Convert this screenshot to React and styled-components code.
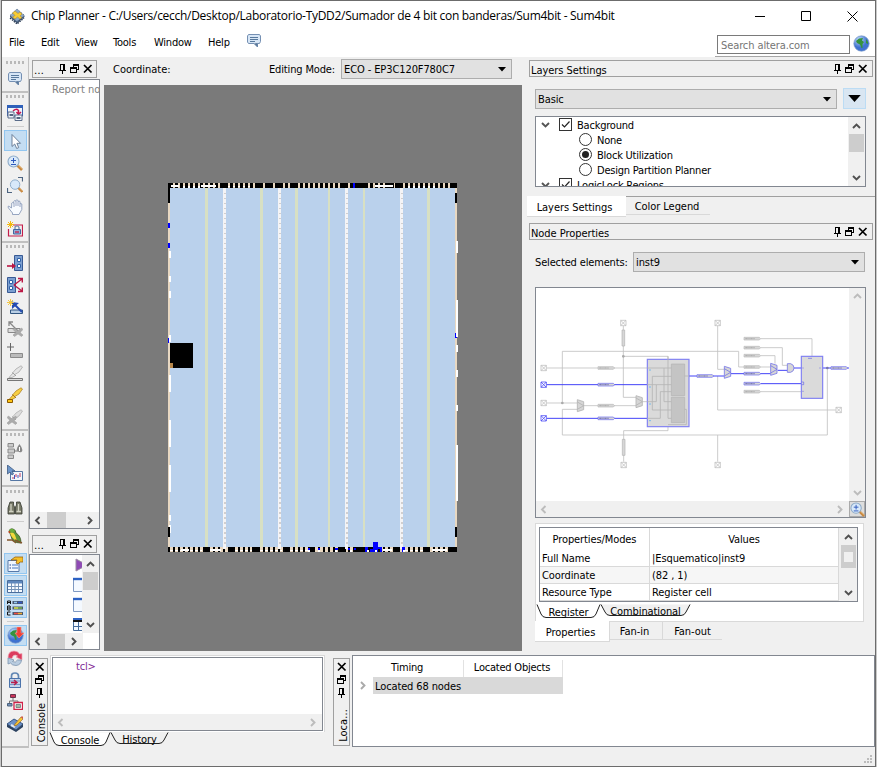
import React from "react";
import styled, { createGlobalStyle, css } from "styled-components";

const Global = createGlobalStyle`
  * { box-sizing: border-box; }
  body { margin: 0; background: #c9c9c9; overflow: hidden; }
  svg { display: block; flex: none; }
`;

const Desktop = styled.div`
  width: 877px; height: 767px; padding: 0 1px 0 1px; background: #c9c9c9;
  font: 11px/15px "DejaVu Sans Condensed", "DejaVu Sans", sans-serif;
  font-stretch: condensed; letter-spacing: -0.22px; color: #000; white-space: nowrap;
`;
const Window = styled.div`
  width: 875px; height: 767px; display: flex; flex-direction: column;
  background: #f0f0f0; border: 1px solid #6c6c6c;
`;
const TitleBar = styled.header`
  height: 30px; flex: none; display: flex; align-items: center; background: #fff; padding-left: 7px;
`;
const Title = styled.h1`
  margin: 0 auto 0 5px; font: 400 12px/18px "Open Sans", "Noto Sans", sans-serif; letter-spacing: -0.29px;
`;
const CaptionButton = styled.div`
  width: 46px; height: 28px; display: grid; place-items: center;
`;
const MenuBar = styled.nav`
  height: 26px; flex: none; display: flex; background: #fff; padding-left: 7px;
`;
const MenuItem = styled.span`
  width: ${(p) => p.$w}px; padding-top: 4px;
`;
const MenuIcon = styled.span`padding-top: 2px;`;
const SearchArea = styled.div`
  margin-left: auto; width: 160px; display: flex; gap: 3px; padding: 4px 0 0 2px; border-bottom: 1px solid #a6a6a6;
`;
const SearchField = styled.div`
  width: 133px; height: 19px; border: 1px solid #7a7a7a; color: #757575; padding: 2px 3px; letter-spacing: -0.1px;
`;
const Body = styled.div`flex: 1; display: flex; min-height: 0;`;
const StatusBar = styled.footer`
  height: 18px; flex: none; display: flex; justify-content: flex-end; align-items: flex-end; padding: 0 2px 2px 0;
`;

/* left tool column */
const Tools = styled.aside`
  width: 27px; flex: none; border-right: 1px solid #c3c3c3;
`;
const ToolSection = styled.div`
  height: ${(p) => p.$h}px; padding-top: ${(p) => p.$top}px;
  border-bottom: 2px solid #c0c0c0; display: flex; flex-direction: column; align-items: center;
`;
const Grip = styled.div`
  width: 19px; height: 3px; flex: none; margin-bottom: 4px;
  background: repeating-linear-gradient(90deg, #b9b9b9 0 2px, transparent 2px 4px);
`;
const Slot = styled.div`
  width: 23px; height: 22px; flex: none; display: grid; place-items: center;
  ${(p) => p.$on && css`background: #c4ddf2; border: 1px solid #92c6f0; height: 21px; margin-bottom: 1px;`}
`;
const Rule = styled.div`
  width: 17px; height: 6px; flex: none; border-bottom: 1px solid ${(p) => (p.$hidden ? "transparent" : "#cdcdcd")};
  margin-top: -3px; margin-bottom: 3px;
`;

const Workspace = styled.div`flex: 1; min-width: 0; display: flex; flex-direction: column;`;
const Upper = styled.div`height: 594px; flex: none; display: flex;`;
const Lower = styled.div`flex: 1; min-height: 0; display: flex; padding-top: 4px;`;

/* dock headers */
const DockHeader = styled.div`
  height: ${(p) => p.$h ?? 18}px; flex: none; border: 1px solid #a0a0a0; display: flex; align-items: center;
  margin: ${(p) => p.$m ?? "0"}; padding: 0 ${(p) => p.$pr ?? 4}px 0 1px; gap: 3px;
`;
const DockTitle = styled.span`margin-right: auto; padding-top: 3px; letter-spacing: -0.05px;`;
const SideHeader = styled.div`
  width: 17px; height: 88px; flex: none; border: 1px solid #a0a0a0; display: flex; flex-direction: column;
  align-items: center; padding-top: 3px; gap: 3px; margin: ${(p) => p.$m};
`;
const SideTitle = styled.span`
  writing-mode: vertical-rl; transform: rotate(180deg); margin: auto -3px 0 0; line-height: 15px; padding-top: 3px;
  letter-spacing: 0;
`;
const Left = styled.div`width: 73px; flex: none; display: flex; flex-direction: column;`;
const Well = styled.div`
  border: 1px solid #828790; background: #fff; display: flex; flex-direction: column; overflow: hidden;
  height: ${(p) => p.$h}px; width: ${(p) => p.$w}px; flex: none; margin: ${(p) => p.$m ?? "0"};
`;
const ReportText = styled.div`flex: 1; color: #808080; padding: 2px 0 0 22px; letter-spacing: 0;`;
const Row = styled.div`display: flex; flex: ${(p) => (p.$grow ? 1 : "none")}; min-height: 0;`;
const TreeIcons = styled.div`
  flex: 1; overflow: hidden; display: flex; flex-direction: column; padding: 2px 0 0 43px; gap: 4px;
`;
const Bar = styled.div`
  background: #f0f0f0; flex: ${(p) => (p.$grow ? "1" : "none")}; display: flex; align-items: center; justify-content: space-between;
  ${(p) => p.$v ? css`width: ${p.$size ?? 17}px; flex-direction: column; padding: ${p.$p ?? "5px 0 4px"};`
    : css`height: ${p.$size ?? 16}px; padding: ${p.$p ?? "0 5px 0 3px"};`}
`;
const Thumb = styled.div`
  background: #cdcdcd; margin: ${(p) => p.$m}; width: ${(p) => p.$w}px; height: ${(p) => p.$h}px; flex: none;
  display: grid; place-items: center;
`;
const ThumbMark = styled.i`width: 9px; height: 10px; background: #f0f0f0;`;

const Center = styled.main`width: 420px; flex: none; padding-left: 2px;`;
const ModeRow = styled.div`height: 28px; display: flex; align-items: flex-start; padding: 2px 0 0 9px;`;
const Label = styled.span`width: ${(p) => p.$w}px; padding-top: 3px; flex: none; letter-spacing: ${(p) => p.$ls}px;`;
const Combo = styled.div`
  width: ${(p) => p.$w}px; height: 20px; border: 1px solid #adadad; background: #e1e1e1; display: flex;
  justify-content: space-between; align-items: center; padding: 1px 5px 0 2px; letter-spacing: ${(p) => p.$ls ?? -0.1}px;
`;
const Canvas = styled.div`width: 418px; height: 566px; background: #7a7a7a; padding: 98px 0 0 64px;`;

const Right = styled.section`width: 353px; flex: none; display: flex; flex-direction: column; padding-left: 7px;`;
const SettingRow = styled.div`display: flex; padding: ${(p) => p.$p}; gap: ${(p) => p.$gap ?? 6}px; align-items: flex-start;`;
const DropButton = styled.div`
  width: 23px; height: 21px; margin-top: -1px; background: #d9e6f2; border: 1px solid #bcdcf4; display: grid; place-items: center;
`;
const LayerList = styled.div`flex: 1; overflow: hidden;`;
const LayerRow = styled.div`
  height: 15px; display: flex; align-items: center; gap: 5px; padding-left: ${(p) => (p.$child ? 43 : 5)}px;
`;
const LayerName = styled.span`padding-top: 1px;`;
const Check = styled.span`
  width: 13px; height: 13px; border: 1px solid #333; background: #fff; margin-left: 4px; flex: none;
`;
const Radio = styled.span`
  width: 13px; height: 13px; border: 1px solid #333; border-radius: 50%; background: #fff; flex: none;
  display: grid; place-items: center;
  &::after { content: ""; width: 7px; height: 7px; border-radius: 50%; background: ${(p) => (p.$on ? "#222" : "transparent")}; }
`;
const TabRow = styled.div`display: flex; align-items: flex-start; margin: ${(p) => p.$m};`;
const Tab = styled.div`
  width: ${(p) => p.$w}px; height: ${(p) => (p.$on ? 21 : 19)}px; text-align: center; flex: none;
  padding: ${(p) => (p.$on ? 4 : p.$top ? 2 : 3)}px ${(p) => p.$pr ?? 2}px 0 0; background: ${(p) => (p.$on ? "#fff" : "transparent")};
  border-bottom: 1px solid #d9d9d9; border-right: ${(p) => (p.$div ? "1px solid #d9d9d9" : "none")};
  border-top: ${(p) => (p.$top ? "1px solid #a0a0a0" : "none")}; letter-spacing: -0.05px;
`;
const TabFill = styled.div`flex: 1; border-top: 1px solid #a0a0a0;`;
const Corner = styled.div`width: 16px; height: 16px; display: grid; place-items: center; background: #ddd; border: 1px solid #aaa;`;

const PropFrame = styled.div`
  width: 329px; height: 99px; flex: none; margin: 5px 0 0 6px; border: 1px solid #d9d9d9; background: #fff;
  padding: 3px 0 0 3px;
`;
const PropTable = styled.div`
  width: 319px; height: 75px; border: 1px solid #828790; display: flex; overflow: hidden;
`;
const PropGrid = styled.div`flex: 1; display: grid; grid-template-columns: 110px 1fr; grid-template-rows: 22px 17px 17px 17px; background: #fff;`;
const Cell = styled.div`
  padding: ${(p) => (p.$head ? "4px 0 0" : "1px 2px 0")}; text-align: ${(p) => (p.$head ? "center" : "left")};
  border-right: 1px solid #d9d9d9; border-bottom: ${(p) => (p.$head ? "none" : "1px solid #d9d9d9")};
  background: ${(p) => (p.$alt ? "#f6f6f6" : "#fff")}; letter-spacing: -0.1px;
`;
const SheetTabs = styled.div`display: flex; height: 16px; flex: none; margin: ${(p) => p.$m};`;
const SheetTab = styled.div`
  width: ${(p) => p.$w}px; height: 16px; position: relative; text-align: center; flex: none; padding-top: ${(p) => (p.$on ? 1 : 0)}px;
  margin-right: ${(p) => (p.$on ? 1 : 0)}px; letter-spacing: -0.1px;
  svg { position: absolute; left: 0; top: 0; overflow: visible; }
  span { position: relative; }
`;

const ConsoleFrame = styled.div`width: 275px; height: 92px; flex: none; margin-left: 2px;`;
const ConsoleEdge = styled.div`height: 77px; border: 1px solid #d9d9d9; background: #fff; padding: 1px; border-bottom: none;`;
const Prompt = styled.div`flex: 1; color: #7f2b95; padding: 1px 0 0 23px;`;
const Located = styled.div`flex: 1; height: 92px; border: 1px solid #828790; background: #fff; margin-left: 2px;`;
const LocatedHead = styled.div`display: flex; height: 21px; padding-top: 4px;`;
const HeadCell = styled.div`
  width: ${(p) => p.$w}px; height: 17px; text-align: center; border-right: 1px solid #e2e2e2; padding-right: 2px;
`;
const LocatedRow = styled.div`display: flex; height: 17px; align-items: center; padding-left: 5px; gap: 6px;`;
const Selected = styled.div`width: 190px; height: 17px; background: #d9d9d9; padding: 2px 2px 0; letter-spacing: -0.12px;`;

const Chevron = ({ dir = "down", c = "#505050" }) => {
  const d = { down: "M1 3L4.5 6.5L8 3", up: "M1 6L4.5 2.5L8 6", left: "M6.5 1L3 4.5L6.5 8", right: "M3 1L6.5 4.5L3 8" }[dir];
  return <svg width="9" height="9" viewBox="0 0 9 9"><path d={d} fill="none" stroke={c} strokeWidth="1.9" /></svg>;
};
const Arrow = ({ w = 8 }) => <svg width={w} height={w / 2 + 0.5} viewBox="0 0 8 4.5"><path d="M0 0H8L4 4.5Z" /></svg>;
const Pin = () => (
  <svg width="9" height="10" viewBox="0 0 9 10" fill="none" stroke="#000" shapeRendering="crispEdges">
    <path d="M2.5 6V.5H5.5V6M0.5 6.5H8M4.5 7V10" /><path d="M6 0V6" strokeWidth="1.4" />
  </svg>
);
const Restore = () => (
  <svg width="10" height="10" viewBox="0 0 10 10" shapeRendering="crispEdges">
    <path d="M3 0H9V6H7V5H8V2H4V3H3Z" /><path d="M0 3H7V9H0ZM1 5V8H6V5Z" fillRule="evenodd" />
  </svg>
);
const Close = () => <svg width="10" height="10" viewBox="0 0 10 10"><path d="M1 1L8.5 8.5M8.5 1L1 8.5" stroke="#000" strokeWidth="1.7" /></svg>;
const DockButtons = () => <><Pin /><Restore /><Close /></>;

const Bubble = () => (
  <svg width="16" height="16" viewBox="0 0 16 16"><path d="M2.5 1.5H13.5L14.5 3V8.5L13.5 10.5H11.5V14L8 10.5H2.5L1.5 9V3Z" fill="#d7e6f6" stroke="#7590b3" /><path d="M4 4.5H12M4 6.5H12M4 8.5H9" stroke="#4a6c93" strokeWidth=".9" /><path d="M8 10.5L11.5 14V10" fill="#5a789b" /></svg>
);
const Globe = ({ arrow }) => (
  <svg width="17" height="17" viewBox="0 0 17 17"><defs><radialGradient id="gl" cx="35%" cy="25%"><stop offset="0" stopColor="#c3defc" /><stop offset="1" stopColor="#3f72d0" /></radialGradient></defs>
    <circle cx="8.5" cy="8.5" r="7.7" fill="url(#gl)" stroke="#7d9bc8" strokeWidth=".7" />
    <path d="M3 6L6 3.5L10 3L9 5.5L11 7L9.5 9V13H8.5L7 9.5L4 8ZM13 4L15 7V9L13 8Z" fill="#35923c" />
    {arrow && <path d="M10 0H14V6H17L12 11L8 6H10Z" fill="#ef4038" stroke="#fa8b78" strokeWidth=".7" />}
  </svg>
);
const Logo = () => (
  <svg width="17" height="17" viewBox="0 0 17 17"><path d="M1 9L8 15.5L15.5 9V8L8 2L1 8Z" fill="#3c5373" /><path d="M1 7.5L8 1L15.5 7.5L8 13.5Z" fill="#8fa9c6" stroke="#5f7694" strokeDasharray="1.5 1" /><path d="M3.5 5L6 3L9 5.5L11 4L13 6L11 8L13 9.5L11 11L8.5 9L6 11L3.5 9L6 7.5Z" fill="#f6cc35" stroke="#ad8522" strokeWidth=".5" /><path d="M1 10L8 16L15 10" fill="none" stroke="#24364e" strokeWidth="1.3" strokeDasharray="1.5 1" /></svg>
);

const Magnifier = () => <><path d="M10 10L15 15" stroke="#c98a43" strokeWidth="2.6" /><path d="M11 9.8L15.5 14" stroke="#e9bf82" strokeWidth=".8" /><circle cx="6.5" cy="6.5" r="5.5" fill="#d8e9fa" stroke="#8caac8" strokeWidth="1.1" /></>;
const Pen = ({ a, b }) => <><path d="M7 10L5.5 8L9 4L14 .8L15.5 2L12 7Z" fill={b} stroke={a} strokeWidth=".7" /><path d="M6 8L8.5 10.5L5 12.5H2Z" fill={b} stroke={a} strokeWidth=".7" /><path d="M5.5 7.5L9 11" stroke={a} strokeWidth="1" /></>;
const Cross = () => <path d="M1.5 7L5 10L8.5 7L10 8.5L7 11.5L10 14L8.5 15.5L5 13L1.5 15.5L0 14L3 11.5L0 8.5Z" fill="#acacac" stroke="#999" strokeWidth=".5" />;

const art = {
  windows: <><path d="M.5 1.5H15.5V11H.5Z" fill="#eef4fb" stroke="#3a60ad" /><path d="M0 0H16V3H0Z" fill="#2e60b9" /><path d="M6 6Q9 3 11.5 5.5V9M9.5 7L11.5 9.5L14 7" stroke="#c51850" strokeWidth="1.5" fill="none" /><path d="M1 7H7V13H1ZM8 10H15V15.5H8Z" fill="#f1f5fb" stroke="#596b89" /><path d="M2.5 9H6V11H2.5ZM9.5 12H13.5V14H9.5Z" fill="#53647f" /></>,
  cursor: <path d="M5 1.5V13.5L7.7 11L9.7 15.5L11.7 14.6L9.9 10.3H13.5Z" fill="#fff" stroke="#61758f" strokeWidth=".9" />,
  zoom: <><Magnifier /><path d="M4 5.5H9M6.5 3V8M4 9.5H9" stroke="#2d59bd" /></>,
  fit: <><path d="M11 .5H15.5V4.5M.5 11V15.5H5" stroke="#4d6480" fill="none" strokeWidth="1.2" /><g transform="translate(2.5 2) scale(.86)"><Magnifier /></g></>,
  hand: <path d="M4.5 9L1.5 7Q.5 8 1.5 9L5.5 14V15.5H12L14.8 10.5V5Q14 3.6 13 5V2.5Q12 1.5 11 2.5V1.5Q9.8 0 9 1.5V2Q7 1 6.8 2.5V4Q5 3 4.8 4Z M7 4V8M9 2V7M11 2.5V7M13 5V8" fill="#f8fbff" stroke="#7d90b3" strokeWidth=".8" />,
  region: <><path d="M6 4H15.5V15H1.5V8" fill="none" stroke="#c41e4b" strokeWidth="1.2" /><path d="M8 9V6Q10.5 3.5 12 6.5V9" fill="none" stroke="#748cae" strokeWidth="1.3" /><path d="M6.5 8.5H13.5V13H6.5Z" fill="#8faed7" stroke="#4267a0" /><path d="M8 11H12" stroke="#c41e4b" strokeWidth="1.3" /><path d="M3.5 0V7M0 3.5H7M1 1L6 6M6 1L1 6" stroke="#f3b90f" /></>,
  fanin: <><path d="M7.5.5H15.5V15.5H7.5Z" fill="#7c9fd0" stroke="#385a94" /><path d="M10.5 3.5H13.5V6.5H10.5ZM10.5 9.5H13.5V12.5H10.5Z" fill="#fff" stroke="#2e61a8" /><path d="M0 11H8" stroke="#bb1744" strokeWidth="1.6" /><path d="M5 8L9 11L5 14Z" fill="#bb1744" /></>,
  fanout: <><path d="M.5.5H8.5V15.5H.5Z" fill="#7c9fd0" stroke="#385a94" /><path d="M2.5 3.5H5.5V6.5H2.5ZM2.5 9.5H5.5V12.5H2.5Z" fill="#fff" stroke="#2e61a8" /><path d="M7 8L15 2M7 8L15 14M11 1.5H15.3V5.5M11 14.5H15.3V10.5" stroke="#bb1744" strokeWidth="1.4" fill="none" /></>,
  wand: <><path d="M3.5 11H15.5V14.5H3.5Z" fill="#b9cfe6" stroke="#315681" /><path d="M5 3L15 13" stroke="#254bb2" strokeWidth="2" /><path d="M5 3V10L12 4Z" fill="#254bb2" /><path d="M3.5 0V7M0 3.5H7M1 1L6 6M6 1L1 6" stroke="#f2c747" /></>,
  wirex: <><path d="M1 7.5H13V11.5H1Z" fill="#ddd" stroke="#888" /><path d="M2 1L12 11M2 5V1H6" stroke="#888" strokeWidth="1.3" fill="none" /><g transform="translate(6 0)"><Cross /></g></>,
  add: <><path d="M3.5 0V8M0 4H7" stroke="#666" /><path d="M3.5 10.5H15.5V14.5H3.5Z" fill="#bbb" stroke="#8b8b8b" /></>,
  penline: <><Pen a="#a0a0a0" b="#e5e5e5" /><path d="M.5 13.5H15.5V15.5H.5Z" fill="#ddd" stroke="#777" /></>,
  pen: <><Pen a="#a8781c" b="#f7cf43" /><path d="M.5 12.5H5.5V15.5H.5Z" fill="#ffc514" stroke="#8b5a00" /></>,
  penx: <><Pen a="#aaa" b="#ddd" /><Cross /></>,
  ink: <><path d="M1 .5H6.5V4H1ZM1 6H7.5V10H1ZM1 12H6.5V15.5H1Z" fill="#ccc" stroke="#888" /><path d="M7 8H11" stroke="#777" /><path d="M12.5 1Q17 7 14.5 9Q12.5 10 10.5 8Q8.5 6 12.5 1Z" fill="#888" /><path d="M12.5 4V8" stroke="#fff" /></>,
  chart: <><path d="M3.5 6.5H15.5V15.5H3.5Z" fill="#f3f7fc" stroke="#5577a4" /><path d="M6 14V12M9 12V9M13 12V8" stroke="#c1385c" /><path d="M7.5 10V14M11 10V13" stroke="#445bc0" /><path d="M.5 0V9L3 7L5 10L6.5 9L5 6H8Z" fill="#6e96c9" stroke="#3e5b83" strokeWidth=".8" /></>,
  find: <><path d="M3 2H6.5V5L7.5 7V14H1V8ZM9.5 2H13L15 8V14H8.5V7L9.5 5Z" fill="#777968" stroke="#353830" strokeWidth=".8" /><path d="M2 11.5H6.5M9.5 11.5H14M4 4V11M11.5 4V11" stroke="#d1d2c3" strokeWidth="1.3" /></>,
  parrot: <><path d="M2 3Q3 0 6 1Q9 2 9 5Q14 8 14 15Q5 15 4 8Z" fill="#5c963a" stroke="#385422" strokeWidth=".8" /><path d="M3 5Q6 3 8 7L10 13Q5 11 3 5Z" fill="#f2d83b" /><path d="M2 3Q3 0 6 1L8 3L5 5Z" fill="#6cae3e" /><path d="M0 12H5L9 15M8 12L15 15" stroke="#82552d" strokeWidth="1.4" fill="none" /><circle cx="2.4" cy="4" r="1" fill="#c4411c" /></>,
  hand2: <><path d="M1 4.5H12V15.5H1Z" fill="#f0f6ff" stroke="#5779a9" /><path d="M5 9H11M5 12H11" stroke="#4676be" /><path d="M2.5 9H4M2.5 12H4" stroke="#224389" /><path d="M4 4L8 1H16V6H13L11 8L9 7L10 4H6Z" fill="#f5bf28" stroke="#976211" strokeWidth=".8" /></>,
  table: <><path d="M.5 2.5H15.5V14.5H.5Z" fill="#f8fbff" stroke="#496d9c" /><path d="M1 3H15V5.5H1Z" fill="#5e87bd" /><path d="M1 8.5H15M1 11.5H15M4.5 5V14M8 5V14M11.5 5V14" stroke="#7492b8" /></>,
  legend: <><path d="M5.5 1H16V4H5.5ZM5.5 6.5H16V9.5H5.5ZM5.5 12H16V15H5.5Z" fill="#4a5971" /><path d="M7 2.5H10" stroke="#96c9f4" strokeWidth="1.5" /><path d="M11 2.5H15" stroke="#3256c4" strokeWidth="1.5" /><path d="M7 8H11" stroke="#dfea45" strokeWidth="1.5" /><path d="M11 8H15" stroke="#78b64a" strokeWidth="1.5" /><path d="M7 13.5H11" stroke="#ed4f3f" strokeWidth="1.5" /><path d="M11 13.5H15" stroke="#f1ac34" strokeWidth="1.5" /><path d="M.5 4V1H3.5V4M.5 2.5H3.5M.5 6H3L3.5 7L2.8 8L3.5 9L3 10H.5ZM.5 8H3M3.5 12H.5V15H3.5" fill="none" stroke="#151515" /></>,
  refresh: <><path d="M1 8Q1 1 7 1Q11 1 12.5 4L15 3.5V10L9 7L10.5 6Q8 4 6 6L5 8.5Z" fill="#dc3c5e" stroke="#f0a6b5" strokeWidth=".7" /><path d="M14.5 10Q14 15 9 15.5Q5 15.5 3.5 13L1 14V8L7 10L5.5 11.5Q8.5 13.5 10.5 10Z" fill="#b9cce0" stroke="#7c94ae" strokeWidth=".8" /></>,
  lock: <><path d="M4.5 8V4Q4.5 1 8 1Q11.5 1 11.5 4V8" fill="none" stroke="#6287b4" strokeWidth="1.7" /><path d="M2.5 6.5H13.5V15.5H2.5Z" fill="#c3d6ec" stroke="#4b73ab" /><path d="M3 9H13M3 12.5H13" stroke="#7698c4" /><path d="M4 10.5H10M7 8L10 10.5L7 13" fill="none" stroke="#b71d4c" strokeWidth="1.4" /></>,
  hierarchy: <><path d="M6 4V7H2.5V10M6 7H11V10" stroke="#777" fill="none" /><path d="M3.5.5H8.5V3.5H3.5Z" fill="#cb3258" stroke="#68344c" /><path d="M.5 9.5H5V12H.5Z" fill="#7793b9" stroke="#4c627d" /><path d="M7 8.5H15.5V15.5H7Z" fill="#fff" stroke="#cf2248" strokeWidth="1.3" /><path d="M9 10.5H13.5V13.5H9Z" fill="#a5b8a5" stroke="#677" strokeWidth=".8" /></>,
  editor: <><path d="M0 8L7 3L16 8L9 14Z" fill="#6c91c8" stroke="#395884" /><path d="M0 8V11L9 16V14ZM16 8V11L9 16V14Z" fill="#2c4260" /><path d="M4 9L8 11" stroke="#e4edf7" strokeWidth="2" /><path d="M8 8L14 1L16 3L10 9L7 10Z" fill="#f6c334" stroke="#9d7029" strokeWidth=".7" /><path d="M14 1L15 0L16 1V3Z" fill="#d45348" /></>,
};
const ToolIcon = ({ n, s = 16 }) => n === "bubble" ? <Bubble /> : n === "globe" ? <Globe arrow /> : <svg width={s} height={s} viewBox="0 0 16 16">{art[n]}</svg>;
const sections = [
  { h: 36, top: 4, items: ["bubble"] },
  { h: 150, top: 2, items: ["windows", "-", "*cursor", "zoom", "fit", "hand", "region"] },
  { h: 188, top: 2, items: ["fanin", "fanout", "wand", "wirex", "add", "penline", "pen", "penx"] },
  { h: 56, top: 2, items: ["ink", "chart"] },
  { h: 261, top: 3, items: ["find", "-", "parrot", "~", "*hand2", "*table", "*legend", "-", "*globe", "refresh", "lock", "hierarchy", "editor"] },
];

/* floor plan of the device */
const solid = [[0, 3], [52, 5], [87, 5], [97, 5], [107, 5], [125, 5], [175, 5], [187, 10], [220, 6], [230, 4], [285, 4]];
const solidB = [[35, 5], [60, 7], [84, 6], [115, 7], [142, 5], [172, 6], [187, 10], [202, 7], [225, 5], [257, 5], [280, 9]];
const whitesL = [[68, 7], [93, 6], [108, 7], [152, 7], [192, 17], [237, 27], [282, 27], [332, 6], [342, 8]];
const whitesR = [[58, 12], [117, 37], [162, 7], [187, 7], [222, 6], [262, 56]];
const Chip = () => (
  <svg width="290" height="369" viewBox="0 0 290 369" shapeRendering="crispEdges">
    <defs>
      <pattern id="pads" width="5" height="5" patternUnits="userSpaceOnUse"><rect width="5" height="5" fill="#ead9c2" /><rect x="2" width="3" height="5" /></pattern>
      <pattern id="padsB" width="5" height="5" patternUnits="userSpaceOnUse" patternTransform="translate(0 364)"><rect width="5" height="5" fill="#ead9c2" /><rect width="2" height="5" /></pattern>
      <pattern id="dash" width="5" height="5" patternUnits="userSpaceOnUse"><rect width="5" height="1" fill="#d2cfcf" /></pattern>
      <pattern id="dash2" width="5" height="5" patternUnits="userSpaceOnUse" patternTransform="translate(0 -1)"><rect width="5" height="2" fill="#d2cfcf" /></pattern>
    </defs>
    <rect width="289" height="369" fill="#e8d8c2" />
    <rect x="2" y="5" width="285" height="359" fill="#bad1ec" />
    <rect width="289" height="5" fill="url(#pads)" /><rect y="364" width="289" height="5" fill="url(#padsB)" />
    {solid.map(([x, w]) => <rect key={x} x={x} width={w} height="5" />)}
    {solidB.map(([x, w]) => <rect key={x} x={x} y="364" width={w} height="5" />)}
    {[[37, 3], [92, 3], [127, 3], [160, 2], [195, 2], [259, 3]].map(([x, w]) => <rect key={x} x={x} y="5" width={w} height="359" fill="#d8e0c3" />)}
    {[55, 110, 177, 232].map((x) => <g key={x}><rect x={x} y="5" width="3" height="361" fill="#f4f4f6" /><rect x={x + 1} y="8" width="2" height="222" fill="url(#dash)" /><rect x={x + 1} y="230" width="2" height="134" fill="url(#dash2)" /></g>)}
    {whitesL.map(([y, h]) => <rect key={y} x="1" y={y} width="2" height={h} fill="#fff" />)}
    {whitesR.map(([y, h]) => <rect key={y} x="288" y={y} width="2" height={h} fill="#fff" />)}
    <path d="M3 3H11M33 3H48M207 3H225" stroke="#fff" strokeWidth="2" />
    <path d="M15 4H32M240 4H270" stroke="#fff" strokeWidth="2" strokeDasharray="2 3" />
    <path d="M60 3.5H85" stroke="#fff" strokeDasharray="2 3" />
    <path d="M13 367H21M42 367H53M215 367H224M264 367H279" stroke="#fff" strokeWidth="2" />
    <path d="M2 367.5H34M67 367.5H84M92 367.5H114M122 367.5H140M237 367.5H256" stroke="#fff" strokeDasharray="3 2" />
    <path d="M0 5H2V20H0ZM0 344H2V354H0ZM287 10H289V20H287ZM287 344H289V354H287Z" />
    <path d="M0 40H2V45H0ZM0 60H2V65H0ZM0 155H1V160H0ZM185 0H187V5H185ZM287 150H288V154H289V155H287ZM205 359H210V364H214V369H212V366H210V369H202V366H205ZM197 364H200V369H197ZM140 365H142V367H140ZM150 365H152V367H150ZM167 365H170V367H167ZM180 365H182V367H180ZM186 365H188V367H186ZM234 364H237V369H234Z" fill="#00f" />
    <path d="M140 368H142M150 368H152M167 368H169M182 368H184M199 368H201M207 368H209M235 368H237" stroke="#fff" strokeWidth="2" />
    <rect x="2" y="160" width="23" height="25" /><rect x="2" y="180" width="3" height="5" fill="#b58549" />
  </svg>
);

const Port = ({ x, y, on }) => <path d={`M${x - 8} ${y - 8}h16v16h-16zl16 16m0-16l-16 16`} fill="none" stroke={on ? "#4747f5" : "#bdbdbd"} strokeWidth="2.3" />;
const Tag = ({ x, y, on, v }) => v
  ? <path d={`M${x - 4} ${y}h8v48h-8z`} fill="#d7d7d7" stroke="#b2b2b2" strokeWidth="2" />
  : <g><path d={`M${x} ${y - 4}h46l4 4l-4 4h-46z`} fill="#d7d7d7" stroke={on ? "#6666ee" : "#b8b8b8"} strokeWidth="2" /><path d={`M${x + 4} ${y}h30`} stroke={on ? "#5353aa" : "#a2a2a2"} strokeWidth="2.5" strokeDasharray="7 2 4 2" /></g>;
const Mux = ({ x, y, on }) => <path d={`M${x} ${y - 18}l19 6v24l-19 6zM${x} ${y - 11}L${x + 19} ${y}L${x} ${y + 11}`} fill="#d6d6d6" stroke={on ? "#7777e8" : "#b3b3b3"} strokeWidth="2.5" />;
const Schematic = () => (
  <svg width="313" height="213" viewBox="18 24 939 639">
    <g fill="none" stroke="#c2c2c2" strokeWidth="2.5">
      <path d="M50 264H352M50 369H142M97 369V214H626V261H642M142 388H97V465H892V264M162 377H318M280 138V352H318M280 229H414V252M338 365H352M563 138V268H582M563 288V390H917M563 465V545M281 545V452H414V434M692 176H846V229M692 203H757V256H772M692 227H735V251M692 261H721M692 335H814" />
    </g>
    <g fill="none" stroke="#4343f8" strokeWidth="3"><path d="M50 314H352M50 415H352M477 288H582M603 281H721M743 271H772M792 264H814M692 311H814M878 264H903M950 264H957" /></g>
    <rect x="352" y="238" width="125" height="202" fill="#dadada" stroke="#8080f2" strokeWidth="3.5" />
    <path d="M424 252H464V347H424ZM424 352H464V428H424Z" fill="#c4c4c4" stroke="#b2b2b2" strokeWidth="2" />
    <path d="M352 264H424M367 390V289H424M352 314H379M352 365H379V314H424M352 415H391V335H424M402 264V365H424M414 229V415H424M367 390H424M464 288H477M464 388H469V434H414" fill="none" stroke="#b5b5b5" strokeWidth="2.5" />
    <path d="M358 270h4M358 321h4M358 372h4M358 422h4" stroke="#45aaf0" strokeWidth="3" />
    <rect x="814" y="229" width="64" height="126" fill="#dadada" stroke="#8080f2" strokeWidth="3.5" />
    <path d="M834 235h12M817 264h4M868 264h4M815 306h6v8h-6M817 334h4" fill="none" stroke="#6666e9" strokeWidth="2" />
    <Port x={41} y={264} /><Port x={41} y={314} on /><Port x={41} y={369} /><Port x={41} y={415} on />
    <Port x={280} y={129} /><Port x={563} y={129} /><Port x={281} y={555} /><Port x={563} y={555} /><Port x={926} y={390} />
    <Tag v x={280} y={150} /><Tag v x={281} y={478} />
    <Tag x={204} y={264} /><Tag x={204} y={314} on /><Tag x={204} y={377} /><Tag x={204} y={415} on /><Tag x={501} y={288} on />
    <Tag x={642} y={176} /><Tag x={642} y={203} /><Tag x={642} y={227} /><Tag x={642} y={261} /><Tag x={642} y={281} on /><Tag x={642} y={311} on /><Tag x={642} y={335} /><Tag x={903} y={264} on />
    <Mux x={142} y={377} /><Mux x={318} y={365} /><Mux x={583} y={277} on /><Mux x={722} y={268} on />
    <path d="M772 251h10q10 3 10 13q0 10-10 13h-10z" fill="#d6d6d6" stroke="#7777e8" strokeWidth="2.5" />
    <circle cx="97" cy="369" r="4" fill="#aaa" /><circle cx="280" cy="229" r="4" fill="#aaa" /><circle cx="892" cy="264" r="4" fill="#77a" />
  </svg>
);

const Sheet = ({ w, on, children }) => {
  const b = on ? 14 : 12;
  return (
    <SheetTab $w={w} $on={on}>
      <svg width={w} height="16"><path d={`M0 .5L4 ${b - 4}Q5.5 ${b - 0.5} 9 ${b - 0.5}H${w - 9}Q${w - 5.5} ${b - 0.5} ${w - 4} ${b - 4}L${w} .5`} fill={on ? "#fff" : "#f0f0f0"} stroke="#222" /></svg>
      <span>{children}</span>
    </SheetTab>
  );
};
const TreeCheck = () => <Check><svg width="11" height="11"><path d="M2 5.5L4.5 8L9.5 2.5" fill="none" stroke="#222" strokeWidth="1.2" /></svg></Check>;
const WindowGlyph = () => <svg width="16" height="16"><path d="M.5 1.5H15.5V14.5H.5Z" fill="#f4f9ff" stroke="#7f99c2" /><path d="M0 2H16" stroke="#2c61c3" strokeWidth="2.4" /></svg>;
const properties = [["Full Name", "|Esquematico|inst9"], ["Coordinate", "(82 , 1)"], ["Resource Type", "Register cell"]];

export default function App() {
  return (
    <Desktop>
      <Global />
      <Window>
        <TitleBar>
          <Logo />
          <Title>Chip Planner - C:/Users/cecch/Desktop/Laboratorio-TyDD2/Sumador de 4 bit con banderas/Sum4bit - Sum4bit</Title>
          <CaptionButton><svg width="10" height="10"><path d="M0 5.5H10" stroke="#000" /></svg></CaptionButton>
          <CaptionButton><svg width="10" height="10"><path d="M.5.5H9.5V9.5H.5Z" fill="none" stroke="#000" /></svg></CaptionButton>
          <CaptionButton><svg width="11" height="11"><path d="M.5.5L10.5 10.5M10.5.5L.5 10.5" stroke="#000" /></svg></CaptionButton>
        </TitleBar>
        <MenuBar>
          <MenuItem $w={32}>File</MenuItem><MenuItem $w={34}>Edit</MenuItem><MenuItem $w={38}>View</MenuItem>
          <MenuItem $w={41}>Tools</MenuItem><MenuItem $w={54}>Window</MenuItem><MenuItem $w={38}>Help</MenuItem>
          <MenuIcon><Bubble /></MenuIcon>
          <SearchArea><SearchField>Search altera.com</SearchField><Globe /></SearchArea>
        </MenuBar>
        <Body>
          <Tools>
            {sections.map((s, i) => (
              <ToolSection key={i} $h={s.h} $top={s.top}>
                <Grip />
                {s.items.map((n, j) => n === "-" ? <Rule key={j} /> : n === "~" ? <Rule key={j} $hidden />
                  : <Slot key={j} $on={n[0] === "*"}><ToolIcon n={n.replace("*", "")} /></Slot>)}
              </ToolSection>
            ))}
          </Tools>
          <Workspace>
            <Upper>
              <Left>
                <DockHeader $m="3px 5px 1px 3px" $pr={3}><DockTitle>…</DockTitle><DockButtons /></DockHeader>
                <Well $w={71} $h={450}>
                  <ReportText>Report not</ReportText>
                  <Bar><Chevron dir="left" /><Thumb $w={19} $h={16} $m="0 auto 0 5px" /><Chevron dir="right" /></Bar>
                </Well>
                <DockHeader $m="6px 5px 1px 3px" $pr={3}><DockTitle>…</DockTitle><DockButtons /></DockHeader>
                <Well $w={71} $h={96}>
                  <Row $grow>
                    <TreeIcons>
                      <svg width="16" height="16"><path d="M3 2L14 8L3 14Z" fill="#8f4bb5" stroke="#9b8ea3" /></svg>
                      <WindowGlyph /><WindowGlyph />
                      <svg width="16" height="16"><path d="M.5 1.5H15.5V13.5H.5Z" fill="#f4f9ff" stroke="#456c9c" /><path d="M0 2H16" stroke="#2c61c3" strokeWidth="2" /><path d="M0 4H16" stroke="#111" strokeWidth="2" /><path d="M0 9.5H16M5.5 5V14" stroke="#456c9c" /></svg>
                    </TreeIcons>
                    <Bar $v $size={17}><Chevron dir="up" /><Thumb $w={15} $h={18} $m="3px 0 auto" /><Chevron dir="down" /></Bar>
                  </Row>
                  <Row><Bar $size={16}><Chevron dir="left" /><Thumb $w={18} $h={15} $m="0 4px 0 5px" /><Chevron dir="right" /></Bar></Row>
                </Well>
              </Left>
              <Center>
                <ModeRow>
                  <Label $w={156} $ls={0}>Coordinate:</Label><Label $w={72} $ls={-0.15}>Editing Mode:</Label>
                  <Combo $w={171} $ls={-0.1}>ECO - EP3C120F780C7<Arrow /></Combo>
                </ModeRow>
                <Canvas><Chip /></Canvas>
              </Center>
              <Right>
                <DockHeader $h={17} $m="3px 2px 0 0"><DockTitle>Layers Settings</DockTitle><DockButtons /></DockHeader>
                <SettingRow $p="12px 0 7px 6px"><Combo $w={302}>Basic<Arrow /></Combo><DropButton><Arrow w={13} /></DropButton></SettingRow>
                <Well $w={331} $h={71} $m="0 0 0 6px">
                  <Row $grow>
                    <LayerList>
                      <LayerRow><Chevron c="#555" /><TreeCheck /><LayerName>Background</LayerName></LayerRow>
                      <LayerRow $child><Radio /><LayerName>None</LayerName></LayerRow>
                      <LayerRow $child><Radio $on /><LayerName>Block Utilization</LayerName></LayerRow>
                      <LayerRow $child><Radio /><LayerName>Design Partition Planner</LayerName></LayerRow>
                      <LayerRow><Chevron c="#555" /><TreeCheck /><LayerName>LogicLock Regions</LayerName></LayerRow>
                    </LayerList>
                    <Bar $v><Chevron dir="up" /><Thumb $w={15} $h={18} $m="3px 0 auto" /><Chevron dir="down" /></Bar>
                  </Row>
                </Well>
                <TabRow $m="9px 0 0 -2px"><Tab $w={99} $on $pr={4}>Layers Settings</Tab><Tab $w={84} $top>Color Legend</Tab><TabFill /></TabRow>
                <DockHeader $h={17} $m="6px 2px 0 0"><DockTitle>Node Properties</DockTitle><DockButtons /></DockHeader>
                <SettingRow $p="12px 0 15px 6px" $gap={7}><Label $w={91} $ls={-0.15}>Selected elements:</Label><Combo $w={232}>inst9<Arrow /></Combo></SettingRow>
                <Well $w={331} $h={231} $m="0 0 0 6px">
                  <Row $grow><Schematic /><Bar $v $size={16} $p="4px 0"><Chevron dir="up" c="#bcbcbc" /><Chevron dir="down" c="#bcbcbc" /></Bar></Row>
                  <Row><Bar $grow $size={16}><Chevron dir="left" c="#bcbcbc" /><Chevron dir="right" c="#bcbcbc" /></Bar><Corner><ToolIcon n="zoom" s={15} /></Corner></Row>
                </Well>
                <PropFrame>
                  <PropTable>
                    <PropGrid>
                      <Cell $head>Properties/Modes</Cell><Cell $head>Values</Cell>
                      {properties.map(([a, b], i) => <React.Fragment key={a}><Cell $alt={i === 1}>{a}</Cell><Cell $alt={i === 1}>{b}</Cell></React.Fragment>)}
                    </PropGrid>
                    <Bar $v $size={18}><Chevron dir="up" /><Thumb $w={15} $h={23} $m="3px 0 auto"><ThumbMark /></Thumb><Chevron dir="down" /></Bar>
                  </PropTable>
                  <SheetTabs $m="2px 0 0 -2px"><Sheet w={63} on>Register</Sheet><Sheet w={89}>Combinational</Sheet></SheetTabs>
                </PropFrame>
                <TabRow $m="-1px 0 0 6px"><Tab $w={75} $on $div $pr={3}>Properties</Tab><Tab $w={53} $div $pr={3}>Fan-in</Tab><Tab $w={59} $pr={0}>Fan-out</Tab></TabRow>
              </Right>
            </Upper>
            <Lower>
              <SideHeader $m="3px 0 0 2px"><Close /><Restore /><Pin /><SideTitle>Console</SideTitle></SideHeader>
              <ConsoleFrame>
                <ConsoleEdge>
                  <Well $w={271} $h={74}>
                    <Prompt>tcl&gt;</Prompt>
                    <Bar><Chevron dir="left" c="#bcbcbc" /><Chevron dir="right" c="#bcbcbc" /></Bar>
                  </Well>
                </ConsoleEdge>
                <SheetTabs $m="0"><Sheet w={60} on>Console</Sheet><Sheet w={57}>History</Sheet></SheetTabs>
              </ConsoleFrame>
              <SideHeader $m="3px 0 0 8px"><Close /><Restore /><Pin /><SideTitle>Loca…</SideTitle></SideHeader>
              <Located>
                <LocatedHead><HeadCell $w={111}>Timing</HeadCell><HeadCell $w={99}>Located Objects</HeadCell></LocatedHead>
                <LocatedRow><Chevron dir="right" c="#aaa" /><Selected>Located 68 nodes</Selected></LocatedRow>
              </Located>
            </Lower>
          </Workspace>
        </Body>
        <StatusBar><svg width="9" height="9" fill="#bcbcbc"><path d="M6 0h2v2H6zM3 3h2v2H3zM6 3h2v2H6zM0 6h2v2H0zM3 6h2v2H3zM6 6h2v2H6z" /></svg></StatusBar>
      </Window>
    </Desktop>
  );
}
